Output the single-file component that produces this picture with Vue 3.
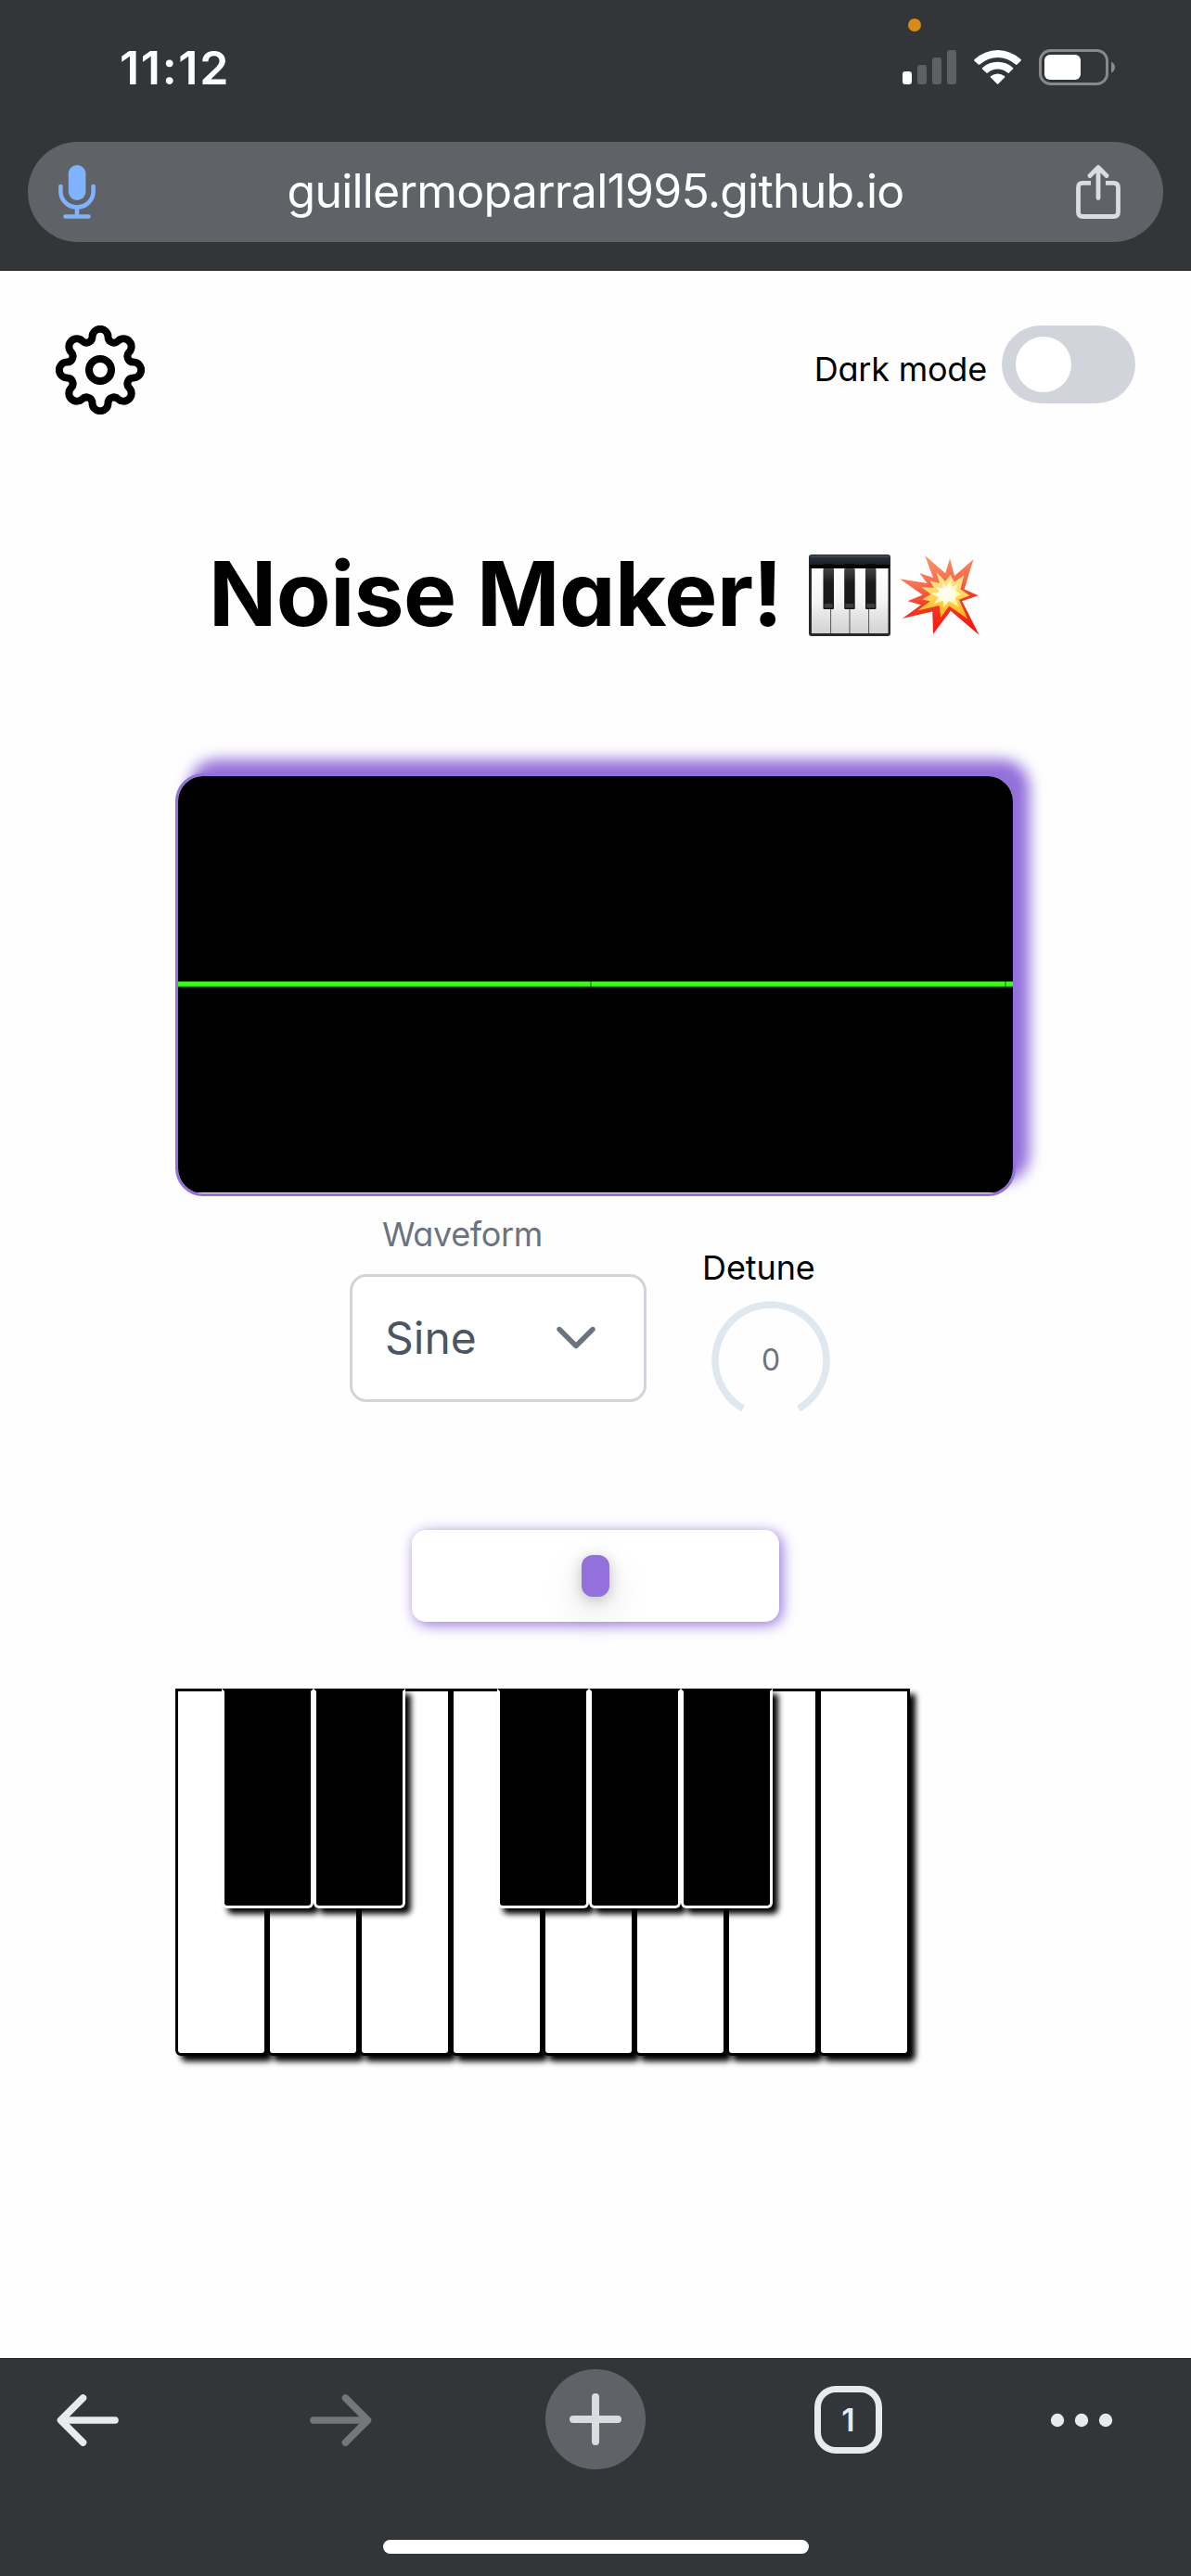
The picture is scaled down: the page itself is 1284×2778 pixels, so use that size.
<script setup>
import { ref } from 'vue'

const url = 'guillermoparral1995.github.io'
const waveform = ref('Sine')
const detune = ref(0)
const whiteKeys = ['C4', 'D4', 'E4', 'F4', 'G4', 'A4', 'B4', 'C5']
const blackGroups = [['C#4', 'D#4'], ['F#4', 'G#4', 'A#4']]

// Eight-lobed cog outline: each lobe arc runs into a concave valley arc.
const turn = (x, y, k) => {
  const a = (k * Math.PI) / 4
  return `${(x * Math.cos(a) - y * Math.sin(a)).toFixed(2)} ${(x * Math.sin(a) + y * Math.cos(a)).toFixed(2)}`
}
let cog = `M${turn(-8.5, -35.7, 0)}`
for (let k = 0; k < 8; k++) {
  cog += `A8.5 8.5 0 0 1 ${turn(8.5, -35.7, k)}A6.3 6.3 0 0 0 ${turn(-8.5, -35.7, k + 1)}`
}
cog += 'Z'
</script>

<template>
  <div class="screen">
    <header class="chrome-top">
      <div class="status">
        <span class="time">11:12</span>
        <svg class="status-icons" width="240" height="100" viewBox="970 0 240 100">
          <circle cx="986" cy="27" r="7" fill="#d88c15" />
          <rect x="973" y="77" width="10" height="14" rx="3" fill="#fff" />
          <g fill="#5f6062">
            <rect x="989" y="70" width="10" height="21" rx="3" />
            <rect x="1005" y="62" width="10" height="29" rx="3" />
            <rect x="1021" y="54" width="10" height="37" rx="3" />
          </g>
          <g fill="#fff">
            <path d="M1050.3 65.5Q1049.8 64.7 1050.6 64A36.5 36.5 0 0 1 1100.6 64Q1101.4 64.700 1100.700 65.500L1096.500 69.600Q1095.700 70.300 1094.900 69.600A28 28 0 0 0 1056.300 69.600Q1055.500 70.300 1054.700 69.600Z" />
            <path d="M1059 74.500Q1058.400 73.700 1059.200 73A24.500 24.500 0 0 1 1092 73Q1092.800 73.700 1092 74.500L1087.900 78.600Q1087.100 79.200 1086.300 78.600A16 16 0 0 0 1064.900 78.600Q1064.100 79.200 1063.300 78.600Z" />
            <path d="M1068 83.400Q1067.400 82.700 1068.200 82A12 12 0 0 1 1083 82Q1083.800 82.700 1083.100 83.500L1076.500 90.300Q1075.600 91.200 1074.700 90.300Z" />
          </g>
          <rect x="1121.500" y="54.500" width="72" height="36" rx="11" fill="none" stroke="#88898b" stroke-width="3" />
          <rect x="1126" y="59" width="39" height="27" rx="6" fill="#fff" />
          <path d="M1198 66.500Q1202 68.500 1202 72.500T1198 78.500Z" fill="#88898b" />
        </svg>
      </div>
      <div class="omnibox">
        <svg width="40" height="58" viewBox="0 0 40 58" fill="none" stroke="#80b3ff" stroke-width="4.600" stroke-linecap="round">
          <rect x="10.800" y="0" width="18.600" height="38" rx="9.300" fill="#80b3ff" stroke="none" />
          <path d="M2.400 23v5.500a17.600 17 0 0 0 35.200 0V23M20 46v9M7.500 55.500h25" />
        </svg>
        <span class="url">{{ url }}</span>
        <svg width="48" height="58" viewBox="0 0 48 58" fill="none" stroke="#dadce3" stroke-width="4.800" stroke-linecap="round" stroke-linejoin="round">
          <path d="M24 35.500V3M15 11.500l9-9 9 9" />
          <path d="M16 19.300H7.500Q2.500 19.300 2.500 24.300V50.500Q2.500 55.500 7.500 55.500H40.500Q45.500 55.500 45.500 50.500V24.300Q45.500 19.300 40.500 19.300H32" stroke-linecap="butt" />
        </svg>
      </div>
    </header>

    <main class="page">
      <div class="toolbar">
        <svg width="96" height="96" viewBox="-48 -48 96 96" fill="none" stroke="#000" stroke-width="8">
          <path :d="cog" />
          <circle r="12" />
        </svg>
        <div class="dark-mode">
          <span class="dark-label">Dark mode</span>
          <span class="switch"><span class="switch-handle"></span></span>
        </div>
      </div>

      <h1 class="title">
        <span class="title-text">Noise Maker!</span>
        <svg class="piano-emoji" width="88" height="88" viewBox="0 0 88 88">
          <defs>
            <linearGradient id="lid" x2="0" y2="1"><stop stop-color="#4b535c" /><stop offset=".2" stop-color="#272e37" /><stop offset=".7" stop-color="#1b2027" /><stop offset=".75" stop-color="#050505" /></linearGradient>
            <linearGradient id="ivory" x2="0" y2="1"><stop stop-color="#fff" /><stop offset=".5" stop-color="#f4f4f4" /><stop offset="1" stop-color="#d2d2d2" /></linearGradient>
            <linearGradient id="ebony" x2="0" y2="1"><stop stop-color="#444" /><stop offset=".35" stop-color="#1c1c1c" /><stop offset="1" stop-color="#161616" /></linearGradient>
          </defs>
          <rect width="88" height="88" rx="3" fill="#26282a" />
          <rect x="1" y="1" width="86" height="14" rx="2" fill="url(#lid)" />
          <rect x="3" y="15" width="82.500" height="70" fill="url(#ivory)" />
          <path d="M23.600 58V85M44 58V85M64.600 58V85" stroke="#555" stroke-width="1" />
          <g v-for="x in [15.5, 38.2, 61]" :key="x">
            <rect :x="x" y="15" width="11.500" height="44" rx="1" fill="url(#ebony)" />
            <rect :x="x + 1.200" y="53" width="9" height="4.500" fill="#3d3d3d" />
            <rect :x="x + .5" y="10" width="10.500" height="2" fill="#0a0a0a" />
          </g>
        </svg>
        <svg width="86" height="87" viewBox="800 895 210 262" preserveAspectRatio="none">
          <defs>
            <linearGradient id="blast" x1=".4" x2=".6" y2="1"><stop stop-color="#ff9569" /><stop offset=".35" stop-color="#f76b4d" /><stop offset=".6" stop-color="#ef3a26" /><stop offset="1" stop-color="#fb140e" /></linearGradient>
            <linearGradient id="flame" x2="0" y2="1"><stop stop-color="#ffe9a0" /><stop offset=".5" stop-color="#ffd65a" /><stop offset="1" stop-color="#ffb111" /></linearGradient>
            <radialGradient id="core"><stop stop-color="#fff" /><stop offset=".5" stop-color="#fffce0" /><stop offset="1" stop-color="#fff19b" /></radialGradient>
          </defs>
          <path fill="url(#blast)" d="M866 898L920 956 932 908 944 964 994 911 970 1008 1007 1028 964 1046 1009 1156 934 1078 888 1153 886 1080 807 1103 856 1058 821 1046 860 1026 800 974 872 988 852 955 888 970Z" />
          <path fill="url(#flame)" d="M897 953L920 982 933 961 944 984 969 963 960 1008 984 1028 956 1042 979 1104 930 1062 908 1100 904 1061 847 1077 880 1046 859 1041 882 1024 857 1001 890 1003 880 981 905 988Z" />
          <path fill="url(#core)" d="M912 979L923 1000 932 976 938 1000 954 990 947 1012 962 1024 946 1035 955 1065 930 1046 915 1068 914 1045 889 1055 902 1034 880 1020 905 1017 896 1001 914 1004Z" />
        </svg>
      </h1>

      <div class="scope">
        <div class="scope-canvas"><div class="trace"><i></i><i></i></div></div>
      </div>

      <div class="controls">
        <div class="field">
          <label class="wave-label">Waveform</label>
          <div class="dropdown">
            <span class="value">{{ waveform }}</span>
            <svg width="42" height="26" viewBox="0 0 42 26" fill="none" stroke="#6b7280" stroke-width="5.400" stroke-linecap="round" stroke-linejoin="round">
              <path d="M3 3.500L21 21.500 39 3.500" />
            </svg>
          </div>
        </div>
        <div class="knob">
          <label class="detune-label">Detune</label>
          <svg width="150" height="150" viewBox="0 0 100 100">
            <path d="M30 84.640A40 40 0 1 1 70 84.640" fill="none" stroke="#dfe7ef" stroke-width="5" />
            <text class="knob-value" x="50" y="57.600" text-anchor="middle">{{ detune }}</text>
          </svg>
        </div>
      </div>

      <div class="slider"><div class="thumb"></div></div>

      <div class="keyboard">
        <div class="whites">
          <div v-for="k in whiteKeys" :key="k" class="key white"></div>
        </div>
        <div class="blacks">
          <div v-for="(group, i) in blackGroups" :key="i" class="black-group">
            <div v-for="k in group" :key="k" class="key black"></div>
          </div>
        </div>
      </div>
    </main>

    <footer class="chrome-bottom">
      <nav class="nav">
        <svg width="68" height="56" viewBox="0 0 68 56" fill="none" stroke="#e8ebee" stroke-width="7.600" stroke-linecap="round" stroke-linejoin="round">
          <path d="M63 28H5M28.500 4L4.500 28l24 24" />
        </svg>
        <svg class="forward" width="68" height="56" viewBox="0 0 68 56" fill="none" stroke="#757678" stroke-width="7.600" stroke-linecap="round" stroke-linejoin="round">
          <path d="M5 28H63M39.500 4L63.500 28l-24 24" />
        </svg>
        <div class="new-tab">
          <svg width="56" height="56" viewBox="0 0 56 56" stroke="#dadce0" stroke-width="8" stroke-linecap="round">
            <path d="M28 4V52M4 28H52" />
          </svg>
        </div>
        <div class="tabs">1</div>
        <svg class="more" width="68" height="16" viewBox="0 0 68 16" fill="#e8ebee">
          <circle cx="8" cy="8" r="7.200" /><circle cx="34" cy="8" r="7.200" /><circle cx="60" cy="8" r="7.200" />
        </svg>
      </nav>
      <div class="home-indicator"></div>
    </footer>
  </div>
</template>

<style>
body { margin: 0; background: #fff; }
</style>

<style scoped>
* { box-sizing: border-box; }
.screen {
  width: 1284px;
  height: 2778px;
  display: flex;
  flex-direction: column;
  overflow: hidden;
  background: #fefefe;
  font-family: Inter, "Liberation Sans", sans-serif;
  font-feature-settings: "cv11";
  color: #000;
}
svg { display: block; flex: none; }

.chrome-top {
  height: 292px;
  background: #323639;
  border-bottom: 1px solid #17191a;
  font-feature-settings: normal;
}
.status {
  height: 153px;
  padding: 0 74px 0 129px;
  display: flex;
  justify-content: space-between;
  align-items: flex-start;
}
.time {
  margin-top: 43px;
  font-size: 50px;
  line-height: 60px;
  font-weight: 600;
  letter-spacing: 1.7px;
  color: #fff;
}
.omnibox {
  height: 108px;
  margin: 0 30px;
  padding: 0 46px 0 33px;
  border-radius: 54px;
  background: #5f6367;
  display: flex;
  align-items: center;
}
.url {
  flex: 1;
  margin: 0 0 3px 21px;
  text-align: center;
  font-size: 50px;
  line-height: 60px;
  letter-spacing: -0.8px;
  color: #fff;
}

.page {
  flex: 1;
  display: flex;
  flex-direction: column;
}
.toolbar {
  margin: 59px 60px 0;
  height: 96px;
  display: flex;
  justify-content: space-between;
}
.dark-mode { display: flex; align-items: flex-start; }
.dark-label {
  margin: 25px 16px 0 0;
  font-size: 36px;
  line-height: 44px;
  letter-spacing: -0.2px;
}
.switch {
  width: 144px;
  height: 84px;
  padding: 12px 15px;
  border-radius: 42px;
  background: #d1d5db;
}
.switch-handle {
  display: block;
  width: 60px;
  height: 60px;
  border-radius: 50%;
  background: #fff;
}
.title {
  margin: 137px 0 0 225px;
  height: 116px;
  display: flex;
  align-items: flex-start;
  font-size: 96px;
  line-height: 113px;
  font-weight: 700;
  letter-spacing: -0.45px;
  white-space: nowrap;
}
.title svg { margin-top: 14px; }
.title .piano-emoji { margin-left: 28px; margin-right: 10px; }

.scope {
  margin: 134px 0 0 189px;
  width: 906px;
  height: 456px;
  border: 3px solid #9370db;
  border-radius: 30px;
  background: #fff;
  box-shadow: 15px -15px 15px #9370db;
  overflow: hidden;
}
.scope-canvas {
  height: 449px;
  padding-top: 221px;
  background: #000;
}
.trace {
  height: 7px;
  display: flex;
  justify-content: space-between;
  padding: 0 7px 0 444px;
  background: linear-gradient(#1c8a09 0 1px, #39ff14 1px 5px, #2bc40f 5px 6px, #0f4d05 6px);
}
.trace i { width: 2px; background: rgba(0, 0, 0, 0.3); }

.controls {
  height: 246px;
  margin-left: 377px;
  display: flex;
}
.field { width: 320px; }
.wave-label {
  display: block;
  margin: 19px 0 0 35px;
  font-size: 36px;
  line-height: 44px;
  letter-spacing: -0.35px;
  color: #6b7280;
}
.dropdown {
  margin-top: 21px;
  height: 138px;
  padding: 0 52px 0 35px;
  border: 3px solid #d1d5db;
  border-radius: 18px;
  display: flex;
  align-items: center;
  justify-content: space-between;
  background: #fff;
}
.value { font-size: 48px; line-height: 58px; color: #4b5563; }
.knob { margin: 55px 0 0 59px; width: 150px; }
.detune-label {
  display: block;
  height: 47px;
  padding-left: 1px;
  line-height: 44px;
  font-size: 36px;
  letter-spacing: -0.1px;
}
.knob-value { font-size: 21.3px; fill: #6b7280; }

.slider {
  margin: 114px 0 0 444px;
  width: 396px;
  height: 99px;
  padding: 27px 183px;
  border-radius: 15px;
  background: #fff;
  box-shadow: 3px 3px 15px #9370db;
}
.thumb {
  width: 30px;
  height: 45px;
  border-radius: 12px;
  background: #9370db;
  box-shadow: 0 3px 15px rgba(0, 0, 0, 0.22), 0 18px 45px rgba(0, 0, 0, 0.14);
}

.keyboard { margin: 72px 0 0 189px; display: grid; width: 792px; }
.whites, .blacks { grid-area: 1 / 1; display: flex; align-items: flex-start; }
.blacks { z-index: 1; padding-left: 50px; gap: 99px; }
.black-group { display: flex; }
.key { width: 99px; box-shadow: 6px 6px 6px #000; }
.white {
  height: 396px;
  background: #fff;
  border: 3px solid #000;
  border-radius: 0 0 6px 6px;
}
.black {
  height: 237px;
  background: #000;
  border: 3px solid #fff;
  border-top-color: #000;
  border-radius: 0 0 6px 6px;
}

.chrome-bottom {
  height: 235px;
  background: #323639;
  border-top: 1px solid #17191a;
}
.nav {
  height: 131px;
  padding-left: 61px;
  display: flex;
  align-items: center;
}
.forward { margin-left: 204px; }
.new-tab {
  width: 108px;
  height: 108px;
  margin: 0 0 1px 187px;
  display: flex;
  align-items: center;
  justify-content: center;
  border-radius: 50%;
  background: #5f6368;
}
.tabs {
  width: 73px;
  height: 73px;
  margin-left: 182px;
  border: 7px solid #e8ebee;
  border-radius: 23px;
  text-align: center;
  font-size: 34px;
  line-height: 60px;
  font-weight: 600;
  color: #e8ebee;
}
.more { margin-left: 181px; }
.home-indicator {
  width: 459px;
  height: 15px;
  margin: 64px auto 0;
  border-radius: 8px;
  background: #fff;
}
</style>
